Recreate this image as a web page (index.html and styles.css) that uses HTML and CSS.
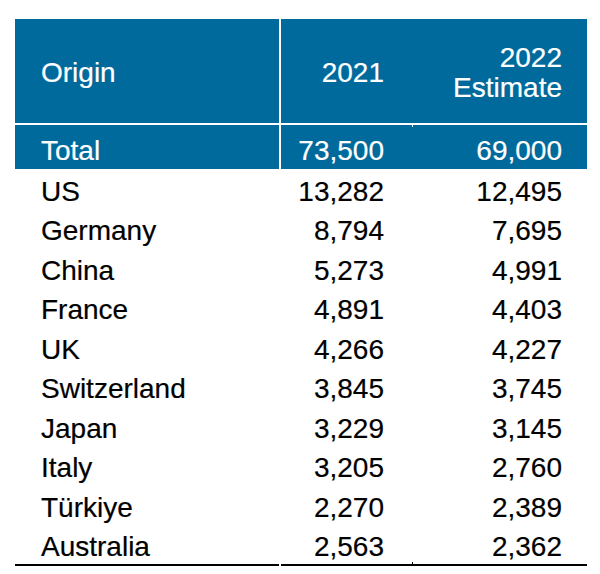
FILE: index.html
```html
<!DOCTYPE html>
<html lang="en">
<head>
<meta charset="utf-8">
<title>Origin table</title>
<link rel="stylesheet" href="styles.css">
</head>
<body>
<div class="page">
  <div class="table">
    <div class="row head">
      <div class="cell c1">Origin</div>
      <div class="cell c2">2021</div>
      <div class="cell c3">2022<br>Estimate</div>
    </div>
    <div class="row total">
      <div class="cell c1">Total</div>
      <div class="cell c2">73,500</div>
      <div class="cell c3 tick">69,000</div>
    </div>
    <div class="row body"><div class="cell c1">US</div><div class="cell c2">13,282</div><div class="cell c3">12,495</div></div>
    <div class="row body"><div class="cell c1">Germany</div><div class="cell c2">8,794</div><div class="cell c3">7,695</div></div>
    <div class="row body"><div class="cell c1">China</div><div class="cell c2">5,273</div><div class="cell c3">4,991</div></div>
    <div class="row body"><div class="cell c1">France</div><div class="cell c2">4,891</div><div class="cell c3">4,403</div></div>
    <div class="row body"><div class="cell c1">UK</div><div class="cell c2">4,266</div><div class="cell c3">4,227</div></div>
    <div class="row body"><div class="cell c1">Switzerland</div><div class="cell c2">3,845</div><div class="cell c3">3,745</div></div>
    <div class="row body"><div class="cell c1">Japan</div><div class="cell c2">3,229</div><div class="cell c3">3,145</div></div>
    <div class="row body"><div class="cell c1">Italy</div><div class="cell c2">3,205</div><div class="cell c3">2,760</div></div>
    <div class="row body"><div class="cell c1">Türkiye</div><div class="cell c2">2,270</div><div class="cell c3">2,389</div></div>
    <div class="row body last"><div class="cell c1">Australia</div><div class="cell c2">2,563</div><div class="cell c3 tick">2,362</div></div>
  </div>
</div>
</body>
</html>
```
FILE: styles.css
```css
html, body {
  margin: 0;
  padding: 0;
  background: #ffffff;
}

.page {
  padding: 19px 0 0 15px;
  font-family: "Liberation Sans", Arial, sans-serif;
  font-size: 28px;
  line-height: 30px;
  color: #000000;
  -webkit-text-stroke: 0.2px currentColor;
}

.table {
  width: 572px;
  display: flex;
  flex-direction: column;
}

.row {
  display: grid;
  grid-template-columns: 264px 133px 175px;
}

.cell {
  box-sizing: border-box;
}

.c1 {
  padding-left: 26px;
  text-align: left;
}

.c2 {
  margin-left: 2px;
  padding-right: 28px;
  text-align: right;
}

.c3 {
  padding-right: 25px;
  text-align: right;
  position: relative;
}

.head .cell,
.total .cell {
  background: #006a9c;
  color: #ffffff;
}

.head .cell {
  height: 104px;
  padding-top: 3px;
  display: flex;
  flex-direction: column;
  justify-content: center;
}

.head .c2,
.head .c3 {
  align-items: flex-end;
}

.total {
  margin-top: 2px;
}

.total .cell {
  height: 44px;
  padding-top: 11px;
}

.body .cell {
  height: 39.5px;
  padding-top: 7.8px;
}

.last .cell {
  border-bottom: 2px solid #000000;
  height: 41.5px;
}

.tick::before {
  content: "";
  position: absolute;
  left: 0;
  width: 1px;
  height: 2px;
}

.total .tick::before {
  top: 0;
  background: #ffffff;
}

.last .tick::before {
  bottom: 0;
  background: #000000;
}
```
